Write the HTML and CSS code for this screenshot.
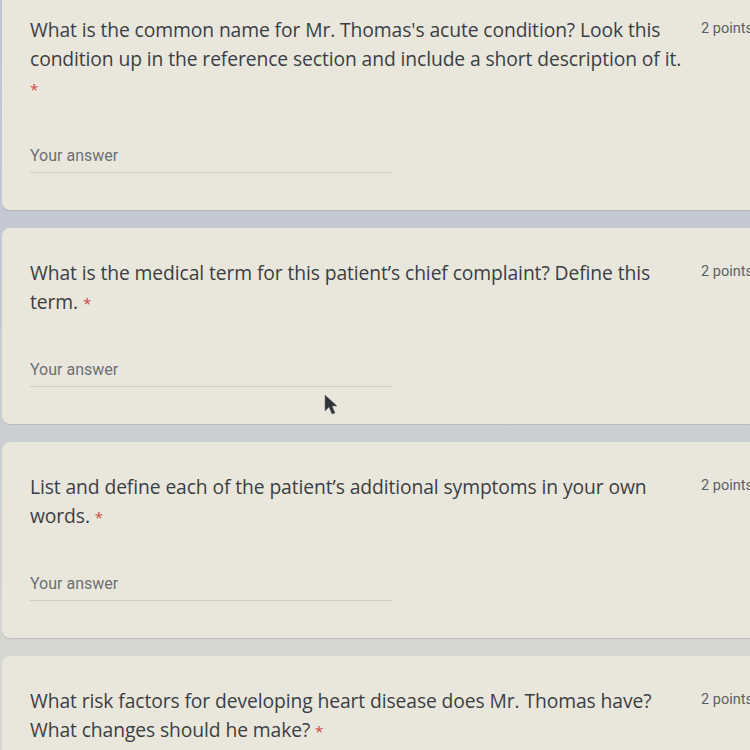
FILE: index.html
```html
<!DOCTYPE html>
<html>
<head>
<meta charset="utf-8">
<link rel="stylesheet" href="styles.css">
</head>
<body>
<div class="page">
  <div class="card">
    <div class="head">
      <div class="q">What is the common name for Mr. Thomas's acute condition? Look this condition up in the reference section and include a short description of it.<br><span class="req">*</span></div>
      <div class="pts">2 points</div>
    </div>
    <div class="answer">Your answer</div>
  </div>
  <div class="card">
    <div class="head">
      <div class="q">What is the medical term for this patient’s chief complaint? Define this term. <span class="req">*</span></div>
      <div class="pts">2 points</div>
    </div>
    <div class="answer">Your answer</div>
  </div>
  <div class="card">
    <div class="head">
      <div class="q">List and define each of the patient’s additional symptoms in your own words. <span class="req">*</span></div>
      <div class="pts">2 points</div>
    </div>
    <div class="answer">Your answer</div>
  </div>
  <div class="card">
    <div class="head">
      <div class="q">What risk factors for developing heart disease does Mr. Thomas have? What changes should he make? <span class="req">*</span></div>
      <div class="pts">2 points</div>
    </div>
    <div class="answer">Your answer</div>
  </div>
</div>
<svg class="cursor" width="18" height="22" viewBox="0 0 18 22"><path d="M2 1 L2 17 L6 13 L9 20 L12 19 L9 12 L14 12 Z" fill="#2f3338" stroke="#6d7077" stroke-width="0.6"/></svg>
</body>
</html>
```
FILE: styles.css
```css
html, body {
  margin: 0;
  padding: 0;
  width: 750px;
  height: 750px;
  overflow: hidden;
}
body {
  background: linear-gradient(180deg, #c2c6d3 0%, #c6cad3 40%, #d4d6d0 85%, #d8d9d2 100%);
  position: relative;
  font-family: "Open Sans", "Noto Sans", sans-serif;
}
.page {
  margin-top: -15px;
  display: flex;
  flex-direction: column;
  gap: 18px;
  padding-left: 2px;
}
.card {
  background: #e9e7dc;
  border-radius: 8px 0 0 8px;
  padding: 30px 0 37px 28px;
  box-shadow: 0 1px 1px rgba(120, 120, 130, 0.25);
}
.head {
  display: flex;
  align-items: flex-start;
}
.q {
  width: 665px;
  flex: 0 0 665px;
  font-size: 19.3px;
  font-weight: 500;
  line-height: 29px;
  color: #3b3e44;
  letter-spacing: -0.1px;
}
.req {
  color: #d0493f;
  font-size: 15px;
  font-weight: 400;
}
.pts {
  margin-left: 6px;
  padding-top: 5px;
  font-family: Roboto, "Liberation Sans", sans-serif;
  font-size: 14.5px;
  color: #5c6066;
  white-space: nowrap;
}
.answer {
  margin-top: 42px;
  width: 362px;
  font-family: Roboto, "Liberation Sans", sans-serif;
  font-size: 16px;
  line-height: 20px;
  color: #6c7075;
  padding-bottom: 6px;
  border-bottom: 1px solid #cfcdc5;
}
.cursor {
  position: absolute;
  left: 323px;
  top: 394px;
}
```
